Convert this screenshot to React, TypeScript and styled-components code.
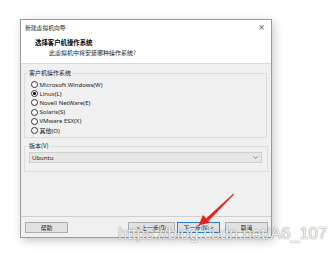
import React from "react";
import styled, { createGlobalStyle } from "styled-components";

const GlobalStyle = createGlobalStyle`
  html, body {
    margin: 0;
    padding: 0;
    background: #fff;
  }
  body {
    font-family: "Noto Sans", "Noto Sans CJK SC", sans-serif;
    color: #000;
  }
`;

const CJK = `"Noto Sans CJK SC", "Noto Sans", sans-serif`;

const OS_LIST = [
  { label: "Microsoft Windows(W)", checked: false },
  { label: "Linux(L)", checked: true },
  { label: "Novell NetWare(E)", checked: false },
  { label: "Solaris(S)", checked: false },
  { label: "VMware ESX(X)", checked: false },
  { label: "其他(O)", checked: false }
];

const Page = styled.div`
  position: relative;
  width: 332px;
  height: 254px;
  padding: 19px 0 0 20px;
  box-sizing: border-box;
  overflow: hidden;
`;

const Dialog = styled.div`
  width: 252px;
  height: 219px;
  box-sizing: border-box;
  border: 1px solid #9a9a9a;
  background: #f0f0f0;
  box-shadow: 2px 3px 9px rgba(0, 0, 0, 0.22);
  display: flex;
  flex-direction: column;
`;

const Header = styled.div`
  height: 44px;
  box-sizing: border-box;
  background: #fff;
  border-bottom: 1px solid #d9d9d9;
  padding: 3px 6px 0 4px;
  display: flex;
  flex-direction: column;
`;

const TitleRow = styled.div`
  display: flex;
  justify-content: space-between;
  align-items: center;
  height: 9px;
`;

const Title = styled.span`
  font-family: ${CJK};
  font-size: 5.8px;
  color: #222;
`;

const Close = styled.span`
  font-family: "DejaVu Sans", sans-serif;
  font-size: 8px;
  color: #555;
  line-height: 1;
`;

const Heading = styled.div`
  font-family: ${CJK};
  font-size: 6.4px;
  font-weight: 700;
  margin: 6px 0 0 10px;
  line-height: 9px;
`;

const Subtitle = styled.div`
  font-family: ${CJK};
  font-size: 6px;
  margin: 1px 0 0 24px;
  line-height: 9px;
  color: #222;
`;

const Body = styled.div`
  flex: 1;
  padding: 5px 3px 0 3px;
  display: flex;
  flex-direction: column;
  gap: 4px;
`;

const Group = styled.fieldset<{ $height: number; $right: number }>`
  margin: 0 ${(p) => p.$right}px 0 0;
  padding: 0 4px 0 4px;
  height: ${(p) => p.$height}px;
  box-sizing: border-box;
  border: 1px solid #dcdcdc;
  min-width: 0;
`;

const Legend = styled.legend`
  font-family: ${CJK};
  font-size: 6px;
  padding: 0 1px;
  margin-left: -1px;
  line-height: 8px;
  color: #222;
`;

const RadioList = styled.div`
  display: flex;
  flex-direction: column;
  padding: 3px 0 0 2px;
`;

const RadioRow = styled.div`
  display: flex;
  align-items: center;
  height: 9.2px;
  gap: 1.5px;
`;

const RadioDot = styled.span<{ $checked: boolean }>`
  width: 5px;
  height: 5px;
  border-radius: 50%;
  border: 0.8px solid #333;
  background: #fff;
  display: flex;
  align-items: center;
  justify-content: center;
  &::after {
    content: "";
    width: 2.6px;
    height: 2.6px;
    border-radius: 50%;
    background: ${(p) => (p.$checked ? "#111" : "transparent")};
  }
`;

const RadioLabel = styled.span`
  font-family: "Noto Sans", ${CJK};
  font-size: 6px;
  color: #222;
  white-space: nowrap;
`;

const Select = styled.div`
  margin-top: 2px;
  height: 11px;
  box-sizing: border-box;
  border: 1px solid #cfcfcf;
  background: #e6e6e6;
  display: flex;
  align-items: center;
  justify-content: space-between;
  padding: 0 3px 0 2px;
  margin-right: 1px;
`;

const SelectText = styled.span`
  font-family: "Noto Sans", sans-serif;
  font-size: 6px;
  color: #222;
`;

const Footer = styled.div`
  height: 21px;
  box-sizing: border-box;
  border-top: 1px solid #d0d0d0;
  padding: 5px 3px 0 4px;
  display: flex;
  align-items: flex-start;
`;

const Button = styled.div<{ $width: number; $primary?: boolean; $gap?: number }>`
  width: ${(p) => p.$width}px;
  height: 11px;
  box-sizing: border-box;
  margin-left: ${(p) => p.$gap ?? 0}px;
  border: 1px solid ${(p) => (p.$primary ? "#2a7fd4" : "#adadad")};
  background: #e1e1e1;
  display: flex;
  align-items: center;
  justify-content: center;
  font-family: ${CJK};
  font-size: 5.8px;
  color: #222;
  white-space: nowrap;
`;

const Spacer = styled.div`
  flex: 1;
`;

const Watermark = styled.div`
  position: absolute;
  left: 118px;
  top: 224px;
  font-family: "Liberation Sans", sans-serif;
  font-size: 16.5px;
  color: rgba(255, 255, 255, 0.92);
  text-shadow: 0 0 1px rgba(0, 0, 0, 0.55), 0 0 2px rgba(0, 0, 0, 0.15);
  white-space: nowrap;
  pointer-events: none;
`;

const Arrow = styled.svg`
  position: absolute;
  left: 0;
  top: 0;
  pointer-events: none;
`;

const App: React.FC = () => {
  return (
    <Page>
      <GlobalStyle />
      <Dialog>
        <Header>
          <TitleRow>
            <Title>新建虚拟机向导</Title>
            <Close>×</Close>
          </TitleRow>
          <Heading>选择客户机操作系统</Heading>
          <Subtitle>此虚拟机中将安装哪种操作系统?</Subtitle>
        </Header>
        <Body>
          <Group $height={69} $right={1}>
            <Legend>客户机操作系统</Legend>
            <RadioList>
              {OS_LIST.map((os) => (
                <RadioRow key={os.label}>
                  <RadioDot $checked={os.checked} />
                  <RadioLabel>{os.label}</RadioLabel>
                </RadioRow>
              ))}
            </RadioList>
          </Group>
          <Group $height={30} $right={0}>
            <Legend>版本(V)</Legend>
            <Select>
              <SelectText>Ubuntu</SelectText>
              <svg width="5" height="3" viewBox="0 0 5 3">
                <path d="M0.5 0.5 L2.5 2.5 L4.5 0.5" fill="none" stroke="#555" strokeWidth="0.7" />
              </svg>
            </Select>
          </Group>
        </Body>
        <Footer>
          <Button $width={43}>帮助</Button>
          <Spacer />
          <Button $width={47}>&lt; 上一步(B)</Button>
          <Button $width={43} $gap={2} $primary>
            下一步(N) &gt;
          </Button>
          <Button $width={43} $gap={5}>
            取消
          </Button>
        </Footer>
      </Dialog>
      <Watermark>https://blog.csdn.net/A6_107</Watermark>
      <Arrow width="332" height="254" viewBox="0 0 332 254">
        <path d="M233.5 193.5 L206 218.5 L208.5 221 L234 194.5 Z" fill="#e8201a" />
        <path d="M198.5 225.5 L203 215 L210 222.5 Z" fill="#e8201a" />
      </Arrow>
    </Page>
  );
};

export default App;
